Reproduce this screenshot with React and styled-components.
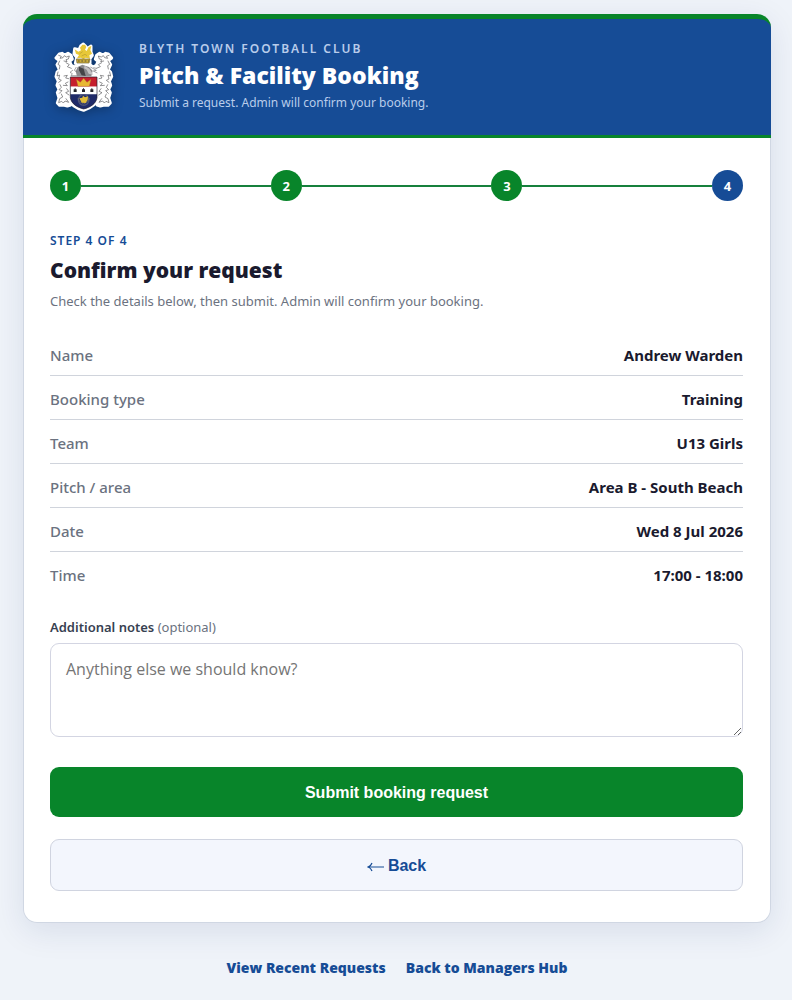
import React, { useState } from 'react';
import styled, { createGlobalStyle } from 'styled-components';

const steps = [1, 2, 3, 4];
const currentStep = 4;

const details = [
  { label: 'Name', value: 'Andrew Warden' },
  { label: 'Booking type', value: 'Training' },
  { label: 'Team', value: 'U13 Girls' },
  { label: 'Pitch / area', value: 'Area B - South Beach' },
  { label: 'Date', value: 'Wed 8 Jul 2026' },
  { label: 'Time', value: '17:00 - 18:00' },
];

// one supporter, mirrored for the other side of the shield
function Supporter() {
  return (
    <g>
      <path
        d="M58 72 L66 70 L74 75 L84 70 L93 76 L97 87 L89 94 L94 106 L107 113 L112 124 L92 140 L89 160 L93 184 L91 202 L96 216 L92 225 L82 228 L70 225 L59 226 L52 219 L57 204 L52 188 L57 178 L51 166 L55 154 L48 140 L51 127 L58 119 L51 104 L58 92 L48 84 Z"
        fill="#fff"
        stroke="#fff"
        strokeWidth="9"
        strokeLinejoin="round"
      />
      <g fill="none" stroke="#5b5a5e" strokeWidth="2" strokeLinecap="round" strokeLinejoin="round">
        <path d="M56 76 l8 3 l-4 6 l9 -2 l4 -6 l6 4 l9 -3 l-3 9 l-7 2 l3 6 l-9 -2" />
        <path d="M59 93 l-5 10 l6 4 l-2 10 M78 98 l10 6 l-6 6 l12 5" />
        <path d="M54 126 l-3 12 l8 -3 l-3 12 l8 4 l-8 6 M72 138 l10 -2 l-5 8 l9 2" />
        <path d="M84 156 l-8 4 l6 7 l-12 -1 M60 164 l4 8 l-7 7 l9 3 l-8 8 M80 176 l6 8 l-9 4 l10 7" />
        <path d="M64 192 l4 9 l-9 5 l-3 12 l9 -4 l5 5 l5 -6 l11 4 l-8 -11" />
      </g>
    </g>
  );
}

function Crest() {
  return (
    <CrestIcon viewBox="27 33 210 216" role="img" aria-label="Blyth Town Football Club crest">
      <g fill="#fff" stroke="#fff" strokeWidth="9" strokeLinejoin="round">
        <path d="M104 56 L117 59 L122 48 L130 42 L137 49 L141 56 L153 48 L153 66 L157 76 L150 86 L150 100 L106 100 L110 82 L102 72 Z" />
        <path d="M94 128 L108 107 L125 99 L150 104 L176 124 L170 142 L172 205 C170 225 148 235 131 241 C112 236 91 225 88 205 L88 142 Z" />
      </g>
      <Supporter />
      <g transform="translate(263 0) scale(-1 1)">
        <Supporter />
      </g>
      <path
        d="M104 58 l11 7 l8 -4 l-3 -8 l7 -9 l8 0 l4 7 l-4 8 l5 4 l6 -12 l8 -3 l-3 12 l5 11 l-8 5 l2 10 l-13 -3 l-7 5 l-7 -5 l-12 2 l6 -10 l-9 -4 z"
        fill="#e8c838"
      />
      <path d="M119 71 l9 -6 M125 78 l10 -5 l6 4" fill="none" stroke="#a58b2a" strokeWidth="1.5" />
      <path d="M109 87 h41 l-3 12 h-36 z" fill="#c8a93a" stroke="#746733" strokeWidth="2" />
      <path d="M114 93 h5 M124 93 h5 M134 93 h5 M144 93 h3" stroke="#635b34" strokeWidth="3" />
      <path d="M107 124 L113 111 L127 104 L147 111 L158 122 L154 139 L111 139 Z" fill="#8b8a8e" />
      <path d="M117 110 l14 6 l6 22 l-12 -2 l-8 -15 z" fill="#444347" />
      <path d="M134 107 l14 9 l12 18 l-14 -3 l-6 -12 l-8 -4 z" fill="#c4c2c4" />
      <path
        d="M99 120 l-9 7 l7 4 l-4 6 h18 M109 111 l-6 10 l9 5 M151 111 l18 10 l-9 2 l12 6 M160 113 l9 2"
        fill="none"
        stroke="#77767a"
        strokeWidth="2"
      />
      <path d="M91 141 H171 V170 H91 Z" fill="#c61f2e" />
      <path d="M91 170 H171 V193 H91 Z" fill="#fff" />
      <path d="M91 193 H171 V203 C168 222 150 232 131 237 C112 232 94 222 91 203 Z" fill="#202b69" />
      <path d="M91 141 H171 V203 C168 222 150 232 131 237 C112 232 94 222 91 203 Z" fill="none" stroke="#211f30" strokeWidth="2" />
      <path d="M109 148 l12 9 l10 -12 l10 12 l12 -9 l-5 21 h-34 z" fill="#e8b832" stroke="#a76a26" strokeWidth="1" />
      <g fill="#25242b">
        <path d="M101 178 h9 v8 h-9 z M126 178 h9 v8 h-9 z M151 178 h9 v8 h-9 z" />
        <path d="M104 175 h3 v4 h-3 z M129 175 h3 v4 h-3 z M154 175 h3 v4 h-3 z" />
      </g>
      <circle cx="131" cy="210" r="16" fill="none" stroke="#4d5478" strokeWidth="4" />
      <path d="M114 204 l5 11 l12 7 l12 -7 l5 -11" fill="none" stroke="#77746f" strokeWidth="2" />
      <path d="M118 205 l9 -2 l2 -6 l6 5 l9 -3 l-1 11 l-6 9 l-12 -1 z" fill="#e2bd37" />
    </CrestIcon>
  );
}

function App() {
  const [notes, setNotes] = useState('');

  return (
    <Page>
      <GlobalStyle />
      <Card>
        <Header>
          <Crest />
          <div>
            <ClubName>Blyth Town Football Club</ClubName>
            <Title>Pitch &amp; Facility Booking</Title>
            <Tagline>Submit a request. Admin will confirm your booking.</Tagline>
          </div>
        </Header>
        <Body>
          <Stepper>
            {steps.map(step => (
              <Step key={step} $first={step === 1}>
                <StepDot $current={step === currentStep}>{step}</StepDot>
              </Step>
            ))}
          </Stepper>
          <StepLabel>Step 4 of 4</StepLabel>
          <Heading>Confirm your request</Heading>
          <Intro>Check the details below, then submit. Admin will confirm your booking.</Intro>
          <Summary>
            {details.map(item => (
              <SummaryRow key={item.label}>
                <dt>{item.label}</dt>
                <dd>{item.value}</dd>
              </SummaryRow>
            ))}
          </Summary>
          <NotesLabel htmlFor="notes">
            Additional notes <span>(optional)</span>
          </NotesLabel>
          <Notes
            id="notes"
            placeholder="Anything else we should know?"
            value={notes}
            onChange={e => setNotes(e.target.value)}
          />
          <Actions>
            <Button type="button" $primary>Submit booking request</Button>
            <Button type="button">
              <BackArrow viewBox="0 0 17 12" aria-hidden="true">
                <path d="M17 7 H1 M5 3 Q4 6 1 7 Q4 8 5 11" />
              </BackArrow>
              Back
            </Button>
          </Actions>
        </Body>
      </Card>
      <Links>
        <a href="#recent">View Recent Requests</a>
        <a href="#hub">Back to Managers Hub</a>
      </Links>
    </Page>
  );
}

export default App;

const displayFont = '"Open Sans", "Noto Sans", sans-serif';

const GlobalStyle = createGlobalStyle`
  * {
    box-sizing: border-box;
  }

  body {
    margin: 0;
    min-height: 100vh;
    background: #eff3f9;
    color: #1a1a2e;
    font-family: "Noto Sans", "Open Sans", sans-serif;
  }
`;

const Page = styled.main`
  padding: 14px 21px 20px 23px;
`;

const Card = styled.div`
  border-radius: 14px;
  box-shadow: 0 8px 32px rgba(23, 43, 99, 0.1);
`;

const Header = styled.header`
  display: flex;
  align-items: center;
  gap: 20px;
  padding: 21px 26px;
  background: #164c96;
  border-top: 5px solid #08852a;
  border-bottom: 3px solid #08852a;
  border-radius: 14px 14px 0 0;
`;

const CrestIcon = styled.svg`
  flex: none;
  width: 70px;
  height: 72px;
  filter: drop-shadow(0 2px 6px rgba(0, 0, 0, 0.3));
`;

const ClubName = styled.div`
  color: #b9cceb;
  font-size: 12px;
  font-weight: 600;
  line-height: 18px;
  letter-spacing: 2px;
  text-transform: uppercase;
`;

const Title = styled.h1`
  margin: 3px 0;
  color: #fff;
  font-family: ${displayFont};
  font-size: 23px;
  font-weight: 800;
  line-height: 28px;
`;

const Tagline = styled.p`
  margin: 0;
  color: #b9cceb;
  font-size: 12px;
  line-height: 22px;
`;

const Body = styled.section`
  padding: 32px 27px 31px 26px;
  background: #fff;
  border: 1px solid #d0d7e3;
  border-top: 0;
  border-radius: 0 0 14px 14px;
`;

const Stepper = styled.ol`
  display: flex;
  margin: 0 0 30px;
  padding: 0;
  list-style: none;
`;

const Step = styled.li`
  display: flex;
  align-items: center;
  flex: ${props => (props.$first ? 'none' : '1')};

  &::before {
    content: "";
    display: ${props => (props.$first ? 'none' : 'block')};
    flex: 1;
    height: 2px;
    background: #16803c;
  }
`;

const StepDot = styled.span`
  display: flex;
  align-items: center;
  justify-content: center;
  width: 31px;
  height: 31px;
  border-radius: 50%;
  background: ${props => (props.$current ? '#164c96' : '#08852a')};
  color: #fff;
  font-size: 13px;
  font-weight: 700;
`;

const StepLabel = styled.div`
  color: #164c96;
  font-size: 12px;
  font-weight: 600;
  line-height: 20px;
  letter-spacing: 1px;
  text-transform: uppercase;
`;

const Heading = styled.h2`
  margin: 5px 0 7px;
  font-family: ${displayFont};
  font-size: 21px;
  font-weight: 800;
  line-height: 28px;
`;

const Intro = styled.p`
  margin: 0 0 21px;
  color: #6b7280;
  font-size: 13px;
  line-height: 20px;
`;

const Summary = styled.dl`
  margin: 0 0 21px;
`;

const SummaryRow = styled.div`
  display: flex;
  align-items: center;
  justify-content: space-between;
  height: 44px;
  padding-top: 2px;
  border-bottom: 1px solid #d0d4dc;
  font-size: 15px;
  line-height: 20px;

  &:last-child {
    border-bottom: 0;
  }

  dt {
    color: #6b7280;
    font-weight: 500;
  }

  dd {
    margin: 0;
    font-weight: 700;
  }
`;

const NotesLabel = styled.label`
  display: block;
  margin-bottom: 6px;
  color: #374151;
  font-size: 13px;
  font-weight: 600;
  line-height: 20px;

  span {
    color: #6b7280;
    font-weight: 400;
  }
`;

const Notes = styled.textarea`
  display: block;
  width: 100%;
  height: 94px;
  padding: 14px 15px;
  border: 1px solid #d3d5e2;
  border-radius: 9px;
  background: #fff;
  color: #1a1a2e;
  font-family: ${displayFont};
  font-size: 16px;
  line-height: 22px;
  resize: vertical;

  &::placeholder {
    color: #757575;
  }
`;

const Actions = styled.div`
  display: flex;
  flex-direction: column;
  gap: 22px;
  margin-top: 30px;
`;

const Button = styled.button`
  display: flex;
  align-items: center;
  justify-content: center;
  gap: 4px;
  width: 100%;
  padding: 16px 15px 14px;
  border: ${props => (props.$primary ? '0' : '1px solid #d0d4e0')};
  border-radius: 9px;
  background: ${props => (props.$primary ? '#08852a' : '#f3f6fd')};
  color: ${props => (props.$primary ? '#fff' : '#164c96')};
  font-family: "Liberation Sans", Arial, sans-serif;
  font-size: 16px;
  font-weight: 700;
  line-height: 20px;
  cursor: pointer;
`;

const BackArrow = styled.svg`
  width: 17px;
  height: 12px;
  fill: none;
  stroke: currentColor;
  stroke-width: 1.2;
`;

const Links = styled.nav`
  display: flex;
  justify-content: center;
  gap: 20px;
  margin-top: 35px;

  a {
    color: #164c96;
    font-family: ${displayFont};
    font-size: 14px;
    font-weight: 800;
    line-height: 20px;
    text-decoration: none;
  }
`;
